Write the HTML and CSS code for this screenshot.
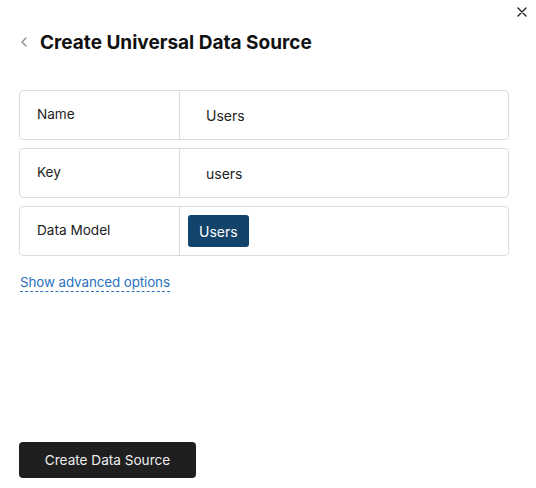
FILE: index.html
```html
<!DOCTYPE html>
<html>
<head>
<meta charset="utf-8">
<link rel="stylesheet" href="styles.css">
</head>
<body>
<div class="panel">
  <button class="close" aria-label="Close">
    <svg width="10" height="10" viewBox="0 0 10 10"><path d="M1 1L9 9M9 1L1 9" stroke="#222" stroke-width="1.4" stroke-linecap="round"/></svg>
  </button>
  <div class="header">
    <svg class="back" width="6" height="10" viewBox="0 0 6 10"><path d="M5 1L1 5L5 9" fill="none" stroke="#888" stroke-width="1.2" stroke-linecap="round" stroke-linejoin="round"/></svg>
    <h1 class="title">Create Universal Data Source</h1>
  </div>
  <div class="form">
    <div class="row">
      <div class="label">Name</div>
      <div class="value">Users</div>
    </div>
    <div class="row">
      <div class="label">Key</div>
      <div class="value">users</div>
    </div>
    <div class="row">
      <div class="label">Data Model</div>
      <div class="value tagcell"><span class="tag">Users</span></div>
    </div>
  </div>
  <a class="advanced" href="#">Show advanced options</a>
  <div class="footer">
    <button class="create">Create Data Source</button>
  </div>
</div>
</body>
</html>
```

FILE: styles.css
```css
html, body {
  margin: 0;
  padding: 0;
  background: #fff;
}
body {
  font-family: Inter, "Noto Sans", sans-serif;
  color: #1e1e1e;
}
.panel {
  position: relative;
  box-sizing: border-box;
  height: 488px;
  padding: 30px 27px 10px 19px;
  display: flex;
  flex-direction: column;
}
.close {
  position: absolute;
  top: 7px;
  right: 9px;
  width: 10px;
  height: 10px;
  padding: 0;
  border: 0;
  background: none;
  display: flex;
}
.header {
  display: flex;
  align-items: center;
  height: 24px;
  gap: 13px;
  padding-left: 2px;
}
.back {
  display: block;
}
.title {
  margin: 0;
  font-size: 19px;
  font-weight: 700;
  letter-spacing: 0;
  color: #111;
}
.form {
  margin-top: 36px;
  display: flex;
  flex-direction: column;
  gap: 8px;
}
.row {
  display: flex;
  height: 50px;
  box-sizing: border-box;
  border: 1px solid #dcdcdc;
  border-radius: 4px;
}
.label {
  width: 160px;
  box-sizing: border-box;
  border-right: 1px solid #dcdcdc;
  padding-left: 17px;
  display: flex;
  align-items: center;
  font-size: 13.6px;
  color: #222;
  padding-bottom: 2px;
}
.value {
  flex: 1;
  display: flex;
  align-items: center;
  padding-left: 26px;
  font-size: 14px;
  color: #222;
}
.tagcell {
  padding-left: 8px;
}
.tag {
  background: #12436a;
  color: #fff;
  border-radius: 3px;
  height: 32px;
  padding: 0 11px;
  display: flex;
  align-items: center;
  font-size: 14px;
}
.advanced {
  margin-top: 17px;
  align-self: flex-start;
  margin-left: 1px;
  font-size: 13.4px;
  letter-spacing: -0.1px;
  color: #2a72c0;
  text-decoration: none;
  border-bottom: 1px dashed #2a72c0;
  line-height: 18px;
}
.footer {
  margin-top: auto;
}
.create {
  width: 177px;
  height: 36px;
  border: 0;
  border-radius: 4px;
  background: #1f1f1f;
  color: #eee;
  font-family: Inter, "Noto Sans", sans-serif;
  font-size: 13.6px;
}
```
